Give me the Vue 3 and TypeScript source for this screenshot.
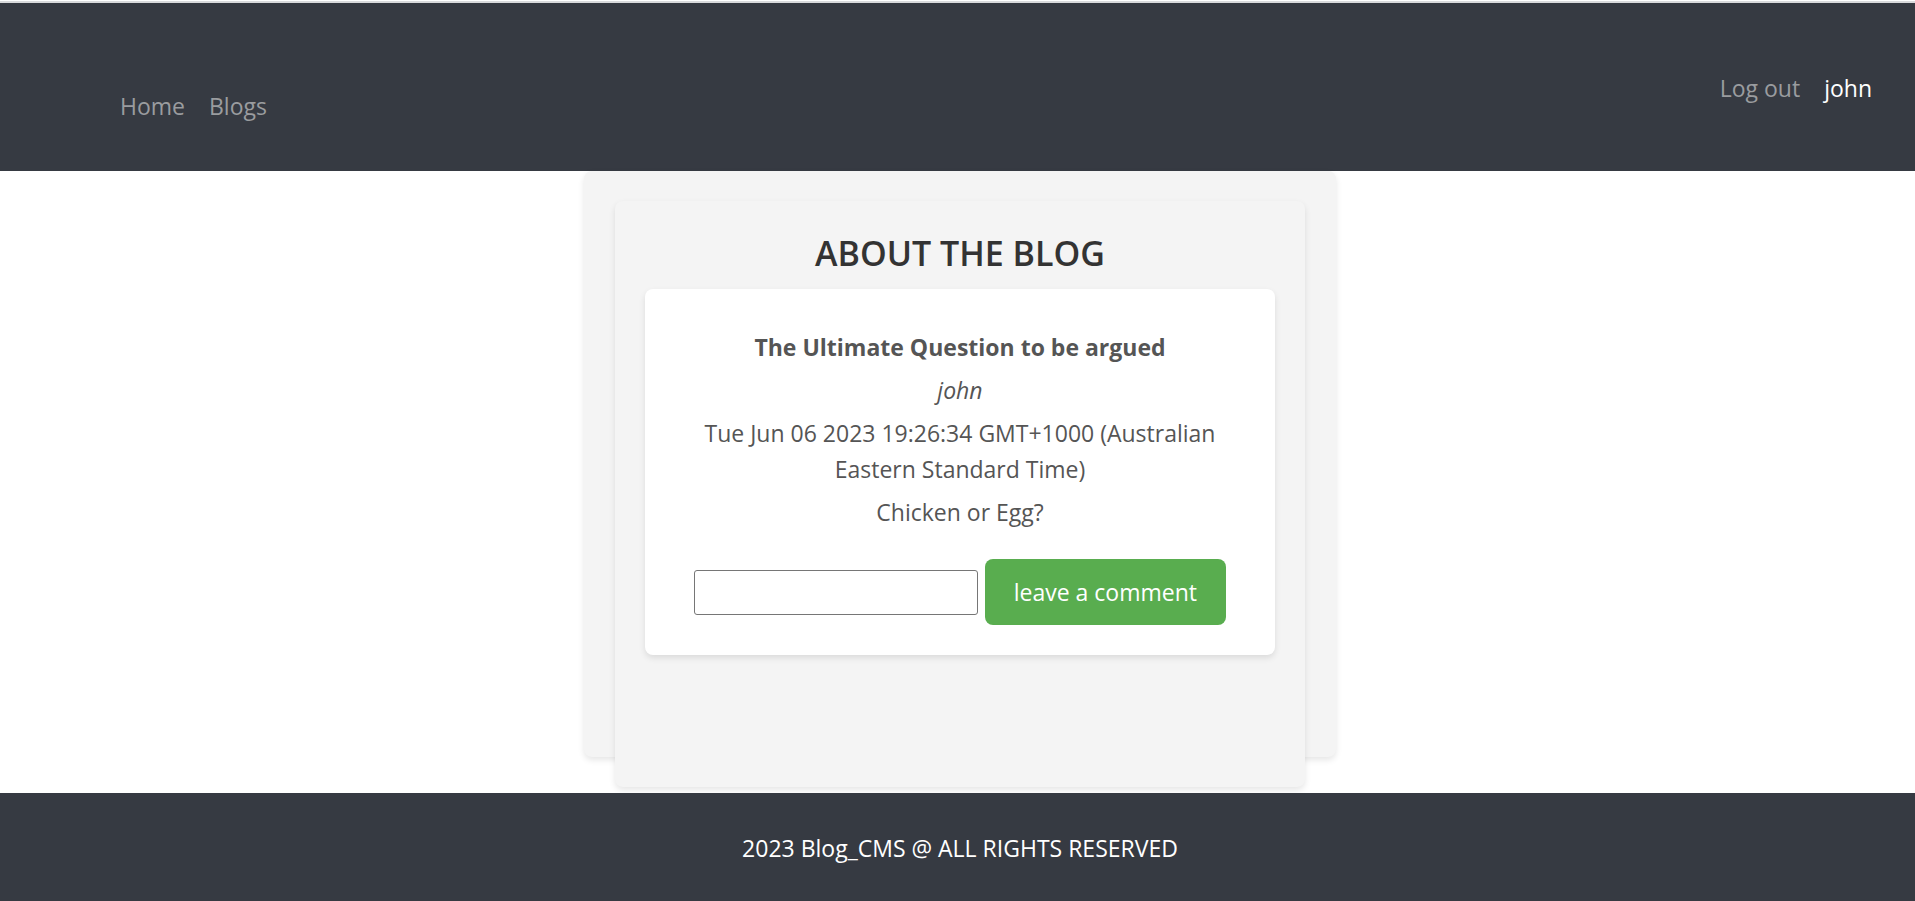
<script setup lang="ts">
import { ref } from 'vue'

interface Blog {
  title: string
  author: string
  date: string
  content: string
}

const blog: Blog = {
  title: 'The Ultimate Question to be argued',
  author: 'john',
  date: 'Tue Jun 06 2023 19:26:34 GMT+1000 (Australian Eastern Standard Time)',
  content: 'Chicken or Egg?',
}

const comment = ref('')
</script>

<template>
  <div class="page">
    <header class="header">
      <nav class="nav">
        <a href="#home">Home</a>
        <a href="#blogs">Blogs</a>
      </nav>
      <div class="account">
        <a href="#logout">Log out</a>
        <span class="user">john</span>
      </div>
    </header>

    <main class="main">
      <div class="panel">
        <section class="panel inner">
          <h1 class="heading">ABOUT THE BLOG</h1>
          <article class="post">
            <p class="title">{{ blog.title }}</p>
            <p class="author">{{ blog.author }}</p>
            <p>{{ blog.date }}</p>
            <p>{{ blog.content }}</p>
            <form class="comment" @submit.prevent>
              <input v-model="comment" type="text" aria-label="Comment" />
              <button type="submit">leave a comment</button>
            </form>
          </article>
        </section>
      </div>
    </main>

    <footer class="footer">2023 Blog_CMS @ ALL RIGHTS RESERVED</footer>
  </div>
</template>

<style>
body {
  margin: 0;
  background: #fff;
}
</style>

<style scoped>
.page {
  box-sizing: border-box;
  min-height: 100vh;
  display: flex;
  flex-direction: column;
  border-top: 1px solid #fff;
  font-family: 'Segoe UI', 'Open Sans', 'Noto Sans', sans-serif;
  font-size: 23px;
  line-height: 36px;
  color: #555;
}

.header {
  display: flex;
  justify-content: space-between;
  align-items: flex-start;
  box-sizing: border-box;
  min-height: 170px;
  padding: 67px 43px 47px 120px;
  border-top: 2px solid #d9dadc;
  background: #363a42;
}

.nav,
.account {
  display: flex;
  gap: 24px;
}

.nav {
  padding-top: 18px;
}

.header a {
  color: #9a9c9f;
  text-decoration: none;
}

.user {
  color: #fff;
}

.main {
  flex: 1;
  padding: 0 0 36px 5px;
}

.panel {
  box-sizing: border-box;
  width: 100%;
  max-width: 752px;
  height: 65vh;
  margin: 0 auto;
  padding: 30px 31px;
  border-radius: 8px;
  background: #f4f4f4;
  box-shadow: 0 3px 6px rgba(0, 0, 0, 0.1);
}

.inner {
  padding: 30px;
}

.heading {
  margin: 0 0 14px;
  font-size: 34px;
  font-weight: 600;
  line-height: 44px;
  text-align: center;
  color: #333;
}

.post {
  padding: 40px 49px 30px;
  border-radius: 8px;
  background: #fff;
  box-shadow: 0 3px 6px rgba(0, 0, 0, 0.1);
  text-align: center;
}

.post p {
  margin: 0 0 7px;
}

.post .title {
  font-weight: 700;
}

.post .author {
  font-style: italic;
}

.comment {
  display: flex;
  align-items: center;
  justify-content: center;
  gap: 7px;
  margin-top: 29px;
}

.comment input {
  box-sizing: border-box;
  flex: 1;
  min-width: 0;
  height: 45px;
  padding: 2px 4px;
  border: 1px solid #767676;
  border-radius: 3px;
  background: #fff;
  font: inherit;
  color: #333;
}

.comment button {
  padding: 15px 29px;
  border: 0;
  border-radius: 8px;
  background: #59ad4f;
  font: inherit;
  color: #fff;
  cursor: pointer;
}

.footer {
  padding: 37px 36px 35px 41px;
  background: #363a42;
  text-align: center;
  color: #fff;
}
</style>
